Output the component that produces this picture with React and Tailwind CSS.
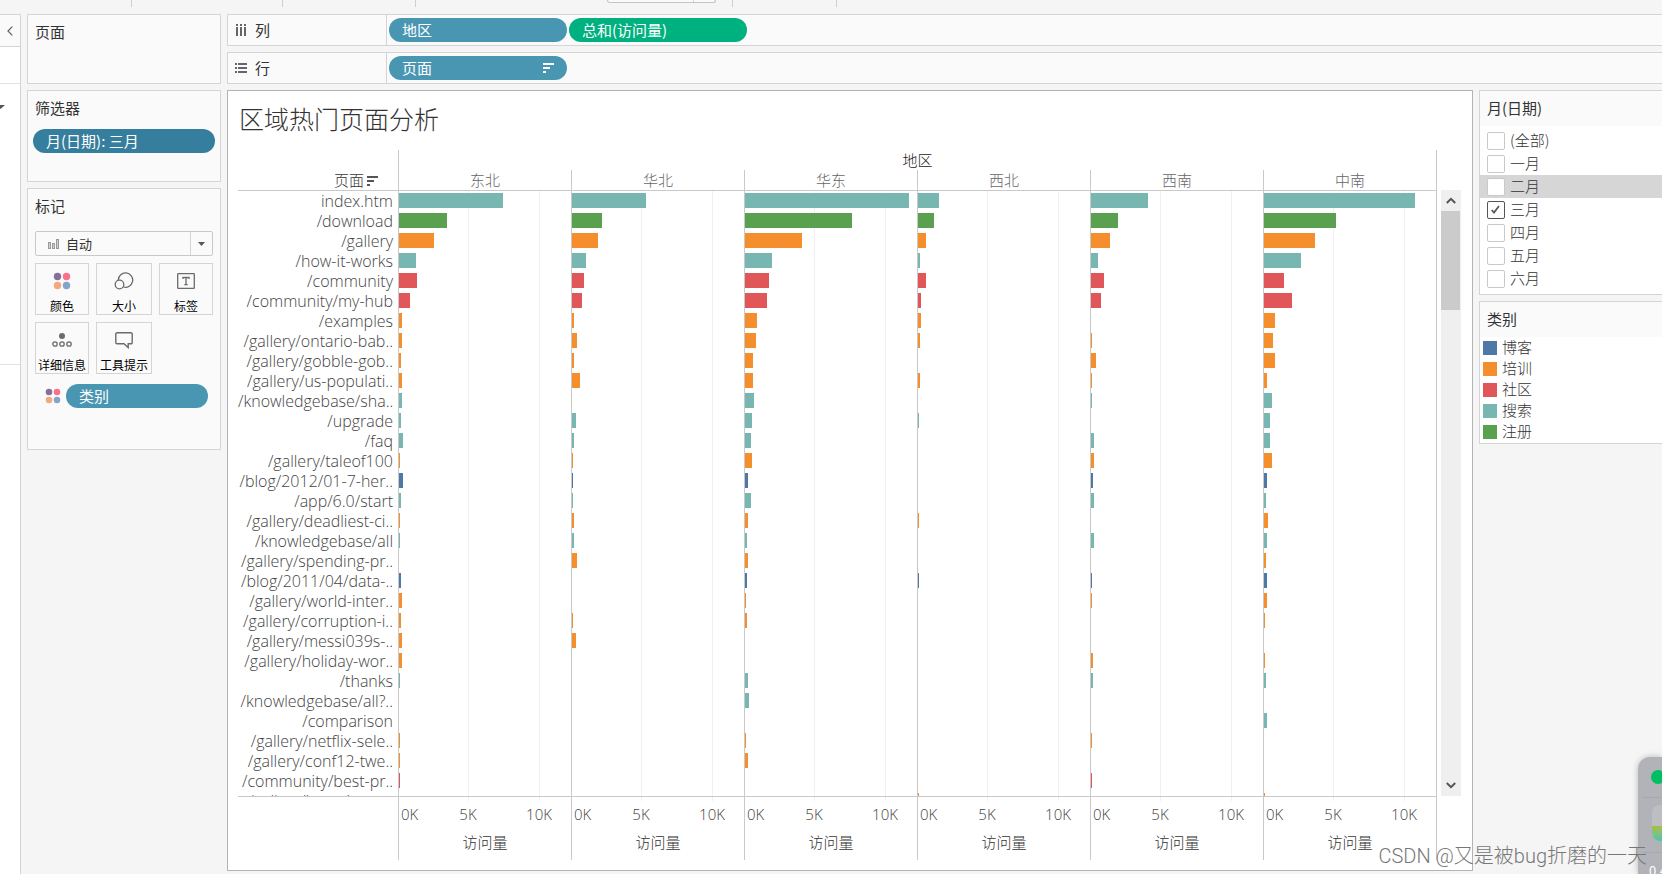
import React, { useState } from 'react';

const REGIONS = ['东北', '华北', '华东', '西北', '西南', '中南'];

const COLORS = {
  博客: '#4e79a7',
  培训: '#f58e2c',
  社区: '#e15659',
  搜索: '#77b6b1',
  注册: '#5aa14f',
};

// counts are kept in steps of ~71 visits, one column per region
const AXIS_MAX = 172;
const TICKS = [
  { label: '5K', at: 69 },
  { label: '10K', at: 140 },
];

const ROWS = [
  ['index.htm', '搜索', [104, 74, 164, 21, 57, 151]],
  ['/download', '注册', [48, 30, 107, 16, 27, 72]],
  ['/gallery', '培训', [35, 26, 57, 8, 19, 51]],
  ['/how-it-works', '搜索', [17, 14, 27, 2, 7, 37]],
  ['/community', '社区', [18, 12, 24, 8, 13, 20]],
  ['/community/my-hub', '社区', [11, 10, 22, 3, 10, 28]],
  ['/examples', '培训', [3, 2, 12, 3, 0, 11]],
  ['/gallery/ontario-bab..', '培训', [3, 5, 11, 2, 1, 9]],
  ['/gallery/gobble-gob..', '培训', [2, 2, 8, 0, 5, 11]],
  ['/gallery/us-populati..', '培训', [3, 8, 8, 2, 1, 3]],
  ['/knowledgebase/sha..', '搜索', [3, 0, 9, 0, 1, 8]],
  ['/upgrade', '搜索', [2, 4, 7, 1, 0, 6]],
  ['/faq', '搜索', [4, 2, 6, 0, 3, 6]],
  ['/gallery/taleof100', '培训', [1, 1, 7, 0, 3, 8]],
  ['/blog/2012/01-7-her..', '博客', [4, 1, 3, 0, 2, 3]],
  ['/app/6.0/start', '搜索', [2, 1, 6, 0, 3, 2]],
  ['/gallery/deadliest-ci..', '培训', [1, 2, 3, 1, 0, 4]],
  ['/knowledgebase/all', '搜索', [1, 2, 2, 0, 3, 3]],
  ['/gallery/spending-pr..', '培训', [0, 5, 3, 0, 0, 2]],
  ['/blog/2011/04/data-..', '博客', [2, 0, 2, 1, 1, 3]],
  ['/gallery/world-inter..', '培训', [3, 0, 1, 0, 1, 3]],
  ['/gallery/corruption-i..', '培训', [2, 1, 2, 0, 0, 1]],
  ['/gallery/messi039s-..', '培训', [3, 4, 0, 0, 0, 0]],
  ['/gallery/holiday-wor..', '培训', [3, 0, 0, 0, 2, 1]],
  ['/thanks', '搜索', [1, 0, 3, 0, 2, 2]],
  ['/knowledgebase/all?..', '搜索', [0, 0, 4, 0, 0, 0]],
  ['/comparison', '搜索', [0, 0, 0, 0, 0, 3]],
  ['/gallery/netflix-sele..', '培训', [1, 0, 1, 0, 1, 0]],
  ['/gallery/conf12-twe..', '培训', [1, 0, 3, 0, 0, 0]],
  ['/community/best-pr..', '社区', [1, 0, 0, 0, 1, 0]],
  ['/gallery/iron-viz-ma..', '培训', [0, 0, 0, 1, 0, 1]],
];

const MONTHS = ['(全部)', '一月', '二月', '三月', '四月', '五月', '六月'];

function SortIcon({ className }) {
  return (
    <svg width="11" height="10" viewBox="0 0 11 10" className={className} fill="currentColor">
      <rect x="0" y="0" width="11" height="2" />
      <rect x="0" y="4" width="7" height="2" />
      <rect x="0" y="8" width="3" height="2" />
    </svg>
  );
}

function DotsIcon({ size }) {
  return (
    <svg width={size} height={size} viewBox="0 0 18 18">
      <circle cx="4.5" cy="4.5" r="3.7" fill="#85709a" />
      <circle cx="13.5" cy="4.5" r="3.7" fill="#fb7185" />
      <circle cx="4.5" cy="13.5" r="3.7" fill="#f3a97d" />
      <circle cx="13.5" cy="13.5" r="3.7" fill="#82a5cb" />
    </svg>
  );
}

function SizeIcon() {
  return (
    <svg width="20" height="18" viewBox="0 0 20 18" fill="none" stroke="#6b6b6b" strokeWidth="1.3">
      <path d="M4.3 8 A7.2 7.2 0 1 1 9.5 15" />
      <circle cx="5.5" cy="12.5" r="4.3" />
    </svg>
  );
}

function LabelIcon() {
  return (
    <svg width="18" height="16" viewBox="0 0 18 16" fill="none" stroke="#6b6b6b" strokeWidth="1.3">
      <rect x="0.7" y="0.7" width="16.6" height="14.6" rx="0.6" />
      <path d="M6 6V4.5h6V6M9 4.5v7M7.3 11.6h3.4" />
    </svg>
  );
}

function DetailIcon() {
  return (
    <svg width="20" height="16" viewBox="0 0 20 16" fill="none" stroke="#6b6b6b" strokeWidth="1.3">
      <circle cx="10" cy="4" r="3" fill="#6b6b6b" stroke="none" />
      <circle cx="3" cy="12" r="2.2" />
      <circle cx="10" cy="12" r="2.2" />
      <circle cx="17" cy="12" r="2.2" />
    </svg>
  );
}

function TooltipIcon() {
  return (
    <svg width="18" height="17" viewBox="0 0 18 17" fill="none" stroke="#6b6b6b" strokeWidth="1.4">
      <path d="M2 .8h14a1.2 1.2 0 0 1 1.2 1.2v8.6a1.2 1.2 0 0 1-1.2 1.2h-2.8V15.6L9 11.8H2A1.2 1.2 0 0 1 .8 10.6V2A1.2 1.2 0 0 1 2 .8z" />
    </svg>
  );
}

function Card({ title, className, children }) {
  return (
    <section className={`border border-[#d4d4d4] bg-[#fafafa] ${className}`}>
      <h2 className="px-[7px] pt-[5px] text-[15px] leading-6 text-[#333]">{title}</h2>
      {children}
    </section>
  );
}

function MarkButton({ icon, label }) {
  return (
    <button className="flex h-[52px] flex-col items-center justify-between border border-[#d4d4d4] bg-[#fafafa] pt-2 text-[12px] leading-4 whitespace-nowrap text-black">
      <span className="flex h-[18px] items-center">{icon}</span>
      {label}
    </button>
  );
}

function Shelf({ icon, label, children }) {
  return (
    <div className="flex h-8 border border-r-0 border-[#d4d4d4] bg-[#fafafa]">
      <div className="flex w-[159px] items-center gap-2 border-r border-[#d4d4d4] pl-[7px] text-[15px] text-[#333]">
        {icon}
        {label}
      </div>
      <div className="flex items-center gap-0.5 pl-0.5">{children}</div>
    </div>
  );
}

function Pill({ className, children }) {
  return (
    <button className={`flex h-6 items-center justify-between rounded-full px-[13px] text-[15px] text-white ${className}`}>
      {children}
    </button>
  );
}

function Toolbar() {
  return (
    <div className="flex h-[14px] items-start pl-[131px]">
      <div className="h-[7px] w-[151px] border-l border-[#cfcfcf]" />
      <div className="h-[7px] w-[133px] border-l border-[#cfcfcf]" />
      <div className="h-[7px] w-[192px] border-l border-[#cfcfcf]" />
      <div className="flex h-[3px] w-[109px] rounded-b-sm border border-t-0 border-[#c4c4c4] bg-[#fafafa]">
        <div className="ml-auto w-[22px] border-l border-[#d4d4d4]" />
      </div>
      <div className="ml-4 h-[7px] w-[104px] border-l border-[#cfcfcf]" />
      <div className="h-[7px] border-l border-[#cfcfcf]" />
    </div>
  );
}

function SideStrip() {
  return (
    <div className="flex w-[21px] shrink-0 flex-col border-t border-r border-[#d4d4d4] bg-white">
      <button className="flex h-8 items-center justify-center border-b border-[#d4d4d4] bg-[#fafafa]" aria-label="收起">
        <svg width="6" height="10" viewBox="0 0 6 10" fill="none" stroke="#666" strokeWidth="1.3">
          <path d="M5.3 .6L1 5l4.3 4.4" />
        </svg>
      </button>
      <div className="h-[37px] border-b border-[#e2e2e2]" />
      <div className="h-[281px] border-b border-[#e2e2e2] pt-[21px]">
        <svg width="5" height="4" viewBox="0 0 5 4" fill="#555">
          <path d="M-4 0h9L.5 4z" />
        </svg>
      </div>
    </div>
  );
}

function MarksCard() {
  return (
    <Card title="标记" className="h-[262px]">
      <div className="mx-[7px] mt-[13px] flex h-[25px] items-center rounded-xs border border-[#c9c9c9] bg-[#fafafa]">
        <svg width="11" height="10" viewBox="0 0 11 10" fill="#d0d0d0" stroke="#9a9a9a" className="ml-3 shrink-0">
          <rect x=".5" y="3.5" width="2" height="6" />
          <rect x="4.5" y="4.5" width="2" height="5" />
          <rect x="8.5" y=".5" width="2" height="9" />
        </svg>
        <select className="h-full flex-1 appearance-none bg-transparent pl-[7px] text-[13px] text-[#333] outline-none" aria-label="标记类型">
          <option>自动</option>
        </select>
        <div className="flex h-full w-[22px] items-center justify-center border-l border-[#d4d4d4]">
          <svg width="7" height="4" viewBox="0 0 7 4" fill="#555"><path d="M0 0h7L3.5 4z" /></svg>
        </div>
      </div>
      <div className="mx-[7px] mt-[7px] grid grid-cols-[54px_56px_54px] justify-between gap-y-[7px]">
        <MarkButton icon={<DotsIcon size={18} />} label="颜色" />
        <MarkButton icon={<SizeIcon />} label="大小" />
        <MarkButton icon={<LabelIcon />} label="标签" />
        <MarkButton icon={<DetailIcon />} label="详细信息" />
        <MarkButton icon={<TooltipIcon />} label="工具提示" />
      </div>
      <div className="mt-[10px] mr-3 ml-[17px] flex items-center gap-[5px]">
        <DotsIcon size={16} />
        <Pill className="flex-1 bg-[#4996b2]">类别</Pill>
      </div>
    </Card>
  );
}

function RegionColumn({ index }) {
  return (
    <div className="min-w-0 flex-1">
      <div className="h-5 border-l border-[#c9c9c9] text-center text-[15px] leading-5 font-light text-[#666]">
        {REGIONS[index]}
      </div>
      <div className="relative h-[607px] overflow-hidden border-y border-l border-[#c9c9c9]">
        {TICKS.map((t) => (
          <div
            key={t.label}
            className="absolute top-0 h-full border-l border-[#f0f0f0]"
            style={{ left: `${(t.at / AXIS_MAX) * 100}%` }}
          />
        ))}
        {ROWS.map(([page, category, counts]) => (
          <div key={page} className="relative h-5 pt-0.5">
            <div
              className="h-[15px]"
              style={{ width: `${(counts[index] / AXIS_MAX) * 100}%`, background: COLORS[category] }}
            />
          </div>
        ))}
      </div>
      <div className="relative h-[63px] border-l border-[#c9c9c9] font-['Open_Sans','Noto_Sans_CJK_SC',sans-serif] text-[15px] leading-5 font-light text-[#444]">
        <div className="h-[35px] pt-[7px] pl-0.5">0K</div>
        {TICKS.map((t) => (
          <div
            key={t.label}
            className="absolute top-0 flex w-0 flex-col items-center"
            style={{ left: `${(t.at / AXIS_MAX) * 100}%` }}
          >
            <div className="mb-[3px] h-1 w-px bg-[#f0f0f0]" />
            {t.label}
          </div>
        ))}
        <div className="text-center text-[#333]">访问量</div>
      </div>
    </div>
  );
}

function ScrollBar() {
  return (
    <div className="mt-10 ml-1 flex h-[606px] w-5 shrink-0 flex-col bg-[#efefef]">
      <button className="flex h-[21px] items-center justify-center" aria-label="向上滚动">
        <svg width="10" height="7" viewBox="0 0 10 7" fill="none" stroke="#555" strokeWidth="2">
          <path d="M.8 6L5 1.8 9.2 6" />
        </svg>
      </button>
      <div className="h-[99px] w-[19px] bg-[#cbcbcb]" />
      <button className="mt-auto flex h-[21px] items-center justify-center" aria-label="向下滚动">
        <svg width="10" height="7" viewBox="0 0 10 7" fill="none" stroke="#555" strokeWidth="2">
          <path d="M.8 1L5 5.2 9.2 1" />
        </svg>
      </button>
    </div>
  );
}

function Chart() {
  return (
    <main className="min-w-0 flex-1 border border-[#b3b3b3] bg-white pr-[11px] pb-[10px] pl-[10px]">
      <h1 className="pt-[7px] pl-px text-[25px] leading-[40px] font-light text-[#333]">区域热门页面分析</h1>
      <div className="mt-3 flex">
        <div className="w-40 shrink-0">
          <div className="flex h-10 items-end justify-end gap-[3px] pr-5 text-[15px] leading-5 font-light text-[#333]">
            页面
            <SortIcon className="mb-1 text-[#555]" />
          </div>
          <div className="h-[607px] overflow-hidden border-y border-[#c9c9c9] pr-[5px] text-right font-['Open_Sans','Noto_Sans_CJK_SC',sans-serif] text-[16px] leading-5 font-light whitespace-nowrap text-[#444]">
            {ROWS.map(([page]) => (
              <div key={page}>{page}</div>
            ))}
          </div>
        </div>
        <div className="min-w-0 flex-1 border-r border-[#c9c9c9]">
          <div className="h-5 border-l border-[#c9c9c9] text-center text-[15px] leading-5 font-light text-[#222]">地区</div>
          <div className="flex">
            {REGIONS.map((name, i) => (
              <RegionColumn key={name} index={i} />
            ))}
          </div>
        </div>
        <ScrollBar />
      </div>
    </main>
  );
}

function MonthFilter() {
  const [checked, setChecked] = useState(['三月']);
  const toggle = (m) => setChecked((c) => (c.includes(m) ? c.filter((x) => x !== m) : [...c, m]));

  return (
    <section className="border border-r-0 border-[#d4d4d4] bg-white pb-1">
      <h2 className="h-[35px] bg-[#fafafa] px-[7px] pt-[5px] text-[15px] leading-6 text-[#333]">月(日期)</h2>
      {MONTHS.map((m) => (
        <label
          key={m}
          className={`flex h-[23px] items-center gap-[5px] pl-[7px] text-[15px] font-light text-[#333] first-of-type:mt-[3px] ${m === '二月' ? 'bg-[#d6d6d6]' : ''}`}
        >
          <span className="relative flex h-[18px] w-[18px] items-center justify-center">
            <input
              type="checkbox"
              checked={checked.includes(m)}
              onChange={() => toggle(m)}
              className="h-[18px] w-[18px] appearance-none rounded-xs border border-[#c9c9c9] bg-white checked:border-[#555]"
            />
            {checked.includes(m) && (
              <svg width="9" height="9" viewBox="0 0 9 9" fill="none" stroke="#555" strokeWidth="1.7" className="pointer-events-none absolute top-1 left-1">
                <path d="M.7 5L3 7.6 8 1" />
              </svg>
            )}
          </span>
          {m}
        </label>
      ))}
    </section>
  );
}

function Legend() {
  return (
    <section className="border border-r-0 border-[#d4d4d4] bg-white pb-px">
      <h2 className="h-[35px] bg-[#fafafa] px-[7px] pt-[5px] text-[15px] leading-6 text-[#333]">类别</h2>
      {Object.entries(COLORS).map(([name, color]) => (
        <div key={name} className="flex h-[21px] items-center gap-[5px] pl-[3px] text-[15px] font-light text-[#333]">
          <span className="h-[14px] w-[14px]" style={{ background: color }} />
          {name}
        </div>
      ))}
    </section>
  );
}

function FloatingMonitor() {
  return (
    <div className="absolute right-0 bottom-0 h-[117px] w-6 overflow-hidden rounded-tl-xl bg-[#b1b3b8] shadow-[0_0_6px_rgba(0,0,0,0.25)]">
      <div className="mt-[13px] ml-[13px] h-[14px] w-[14px] rounded-full bg-[#00bf63]" />
      <div className="mt-[13px] ml-1 border-t border-[#a6a8ad]" />
      <div className="mt-[7px] ml-[14px] h-9 w-4 overflow-hidden rounded-lg bg-[#bcbec2]">
        <div className="mt-[21px] h-4 bg-linear-to-b from-[#a9bd3a] to-[#36c5b8]" />
      </div>
      <div className="mt-[11px] ml-1 border-t border-[#a6a8ad]" />
      <div className="mt-2 ml-[11px] text-[13px] leading-5 whitespace-nowrap text-white">0.4</div>
    </div>
  );
}

export default function App() {
  return (
    <div className="relative flex min-h-screen flex-col overflow-hidden bg-[#f5f5f5] font-['Noto_Sans_CJK_SC',sans-serif]">
      <Toolbar />
      <div className="flex flex-1 gap-[6px]">
        <SideStrip />
        <aside className="flex w-[194px] shrink-0 flex-col gap-[6px]">
          <Card title="页面" className="h-[70px]" />
          <Card title="筛选器" className="h-[92px]">
            <div className="mt-[9px] px-[5px]">
              <Pill className="w-full bg-[#367e9d]">月(日期): 三月</Pill>
            </div>
          </Card>
          <MarksCard />
        </aside>
        <div className="flex min-w-0 flex-1 flex-col gap-[6px]">
          <Shelf
            label="列"
            icon={
              <svg width="12" height="13" viewBox="0 0 12 13" fill="#666">
                <path d="M1 0h2v2H1zM5 0h2v2H5zM9 0h2v2H9zM1 3h2v9H1zM5 3h2v9H5zM9 3h2v9H9z" />
              </svg>
            }
          >
            <Pill className="w-[178px] bg-[#4996b2]">地区</Pill>
            <Pill className="w-[178px] bg-[#00b180]">总和(访问量)</Pill>
          </Shelf>
          <Shelf
            label="行"
            icon={
              <svg width="12" height="10" viewBox="0 0 12 10" fill="#666">
                <path d="M0 0h2v2H0zM3 0h9v2H3zM0 4h2v2H0zM3 4h9v2H3zM0 8h2v2H0zM3 8h9v2H3z" />
              </svg>
            }
          >
            <Pill className="w-[178px] bg-[#4996b2]">
              页面
              <SortIcon />
            </Pill>
          </Shelf>
          <div className="flex items-start gap-[6px]">
            <Chart />
            <aside className="flex w-[183px] shrink-0 flex-col gap-[6px]">
              <MonthFilter />
              <Legend />
            </aside>
          </div>
        </div>
      </div>
      <FloatingMonitor />
      <div className="absolute right-[15px] bottom-[3px] font-['Roboto','Noto_Sans_CJK_SC',sans-serif] text-[20px] leading-[30px] font-light whitespace-nowrap text-[#777]">
        CSDN @又是被bug折磨的一天
      </div>
    </div>
  );
}
